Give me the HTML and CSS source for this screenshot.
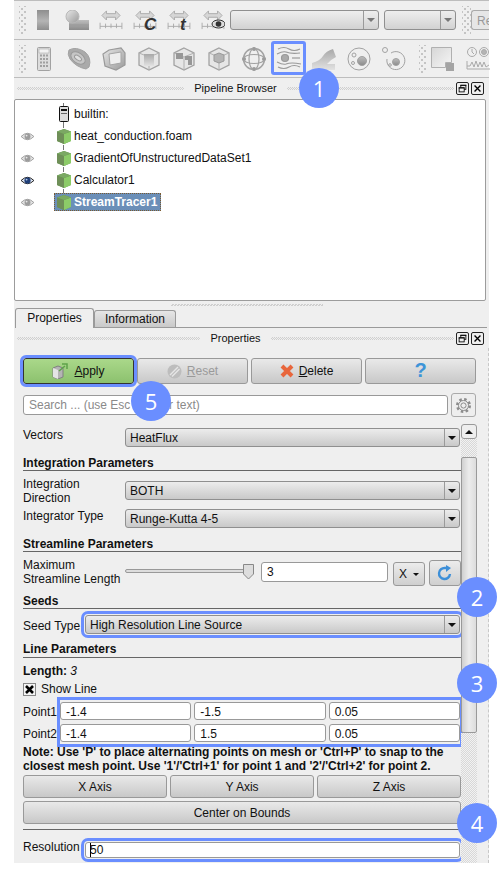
FILE: index.html
```html
<!DOCTYPE html>
<html lang="en">
  <head>
    <meta charset="utf-8">
    <title>Pipeline Browser</title>
    <link rel="stylesheet" href="styles.css">
  </head>
  <body>
    <svg class="defs">
      <defs>
        <linearGradient id="g-v" x1="0" y1="0" x2="0" y2="1"><stop offset="0" stop-color="#bdbdbd"/><stop offset="1" stop-color="#8a8a8a"/></linearGradient>
        <linearGradient id="g-bar" x1="0" y1="0" x2="0" y2="1"><stop offset="0" stop-color="#8e8e8e"/><stop offset=".55" stop-color="#b4b4b4"/><stop offset="1" stop-color="#8e8e8e"/></linearGradient>
        <linearGradient id="g-u" x1="0" y1="0" x2="0" y2="1"><stop offset="0" stop-color="#a8a8a8"/><stop offset="1" stop-color="#e2e2e2"/></linearGradient>
        <linearGradient id="g-d" x1="0" y1="0" x2="1" y2="1"><stop offset="0" stop-color="#e8e8e8"/><stop offset="1" stop-color="#9a9a9a"/></linearGradient>
        <linearGradient id="g-p" x1="0" y1="0" x2="1" y2="1"><stop offset="0" stop-color="#d6d6d6"/><stop offset="1" stop-color="#f6f6f6"/></linearGradient>
        <symbol id="ruler" viewBox="0 0 26 22">
          <path d="M3 6 L8 1 V4 H18 V1 L23 6 L18 11 V8 H8 V11 Z" fill="#d6d6d6" stroke="#a8a8a8"/>
          <path d="M1 18 H25 M1 14 V21 M7 15 V20 M13 15 V20 M19 15 V20 M25 14 V21" stroke="#a8a8a8" fill="none"/>
        </symbol>
        <symbol id="cube-outline" viewBox="0 0 24 24">
          <path d="M12 1 L22 6 V18 L12 23 L2 18 V6 Z" fill="#e6e6e6" stroke="#a2a2a2" stroke-width="1.3"/>
          <path d="M2 6 L12 10 L22 6 M12 10 V23" stroke="#b0b0b0" fill="none"/>
        </symbol>
        <symbol id="green-cube" viewBox="0 0 16 17">
          <path d="M8 1 L15 3.5 V13 L8 16 L1 13 V3.5 Z" fill="#5f9a48"/>
          <path d="M1 3.5 L8 6 V16 L1 13 Z" fill="#6f8f58"/>
          <path d="M8 6 L15 3.5 V13 L8 16 Z" fill="#8ccb68"/>
          <path d="M8 1 L15 3.5 L8 6 L1 3.5 Z" fill="#7ba863"/>
        </symbol>
        <symbol id="eye" viewBox="0 0 16 12">
          <path d="M1 6 Q8 -1 15 6 Q8 13 1 6 Z" fill="#e4e4e4" stroke="#9a9a9a"/>
          <circle cx="8" cy="6" r="3.2" fill="#9c9c9c"/>
          <circle cx="7" cy="5" r="1" fill="#e8e8e8"/>
        </symbol>
        <symbol id="eye-on" viewBox="0 0 16 12">
          <path d="M1 6 Q8 -1 15 6 Q8 13 1 6 Z" fill="#dfe6f2" stroke="#111"/>
          <circle cx="8" cy="6" r="3.4" fill="#1f3f78"/>
          <circle cx="7" cy="5" r="1" fill="#b9c9e6"/>
        </symbol>
        <symbol id="restore" viewBox="0 0 13 13">
          <rect x="4.5" y="2.5" width="6" height="5" fill="none" stroke="#000"/>
          <rect x="2.5" y="5.5" width="6" height="5" fill="#eee" stroke="#000"/>
          <path d="M4 3 H11 M2 6 H9" stroke="#000"/>
        </symbol>
        <symbol id="close" viewBox="0 0 13 13">
          <path d="M3 3 L10 10 M10 3 L3 10" stroke="#000" stroke-width="1.6"/>
        </symbol>
      </defs>
    </svg>

    <div class="app">
      <div class="toolbar toolbar-one">
        <span class="grip"></span>
        <span class="tool"><svg width="14" height="20" viewBox="0 0 14 20"><rect x="1" width="12" height="20" fill="url(#g-bar)"/></svg></span>
        <span class="tool"><svg width="24" height="20" viewBox="0 0 24 20"><rect x="4" y="10" width="20" height="10" fill="url(#g-v)"/><path d="M4 15 H24" stroke="#999"/><circle cx="7.5" cy="6.5" r="6.5" fill="url(#g-d)" stroke="#b8b8b8"/></svg></span>
        <span class="tool"><svg width="24" height="20"><use href="#ruler"/></svg></span>
        <span class="tool"><svg class="letter-svg" width="24" height="26"><use href="#ruler" width="24" height="20"/><text x="11" y="20" class="ruler-c">C</text></svg></span>
        <span class="tool"><svg class="letter-svg" width="24" height="26"><use href="#ruler" width="24" height="20"/><text x="13" y="20" class="ruler-t">t</text></svg></span>
        <span class="tool"><svg width="24" height="20"><use href="#ruler"/><ellipse cx="17.5" cy="14" rx="6.5" ry="4" fill="#ddd" stroke="#333"/><circle cx="17.5" cy="14" r="2.8" fill="#333"/></svg></span>
        <div class="combo combo-blank combo-a"><span class="combo-text"></span><span class="combo-arrow grey"></span></div>
        <div class="combo combo-blank combo-b"><span class="combo-text"></span><span class="combo-arrow grey"></span></div>
        <span class="grip grip-mid"></span>
        <div class="cut-btn">Re</div>
      </div>

      <div class="toolbar toolbar-two">
        <span class="grip"></span>
        <span class="slot"><svg width="14" height="24" viewBox="0 0 14 24"><rect x=".5" y=".5" width="13" height="23" rx="1" fill="#ddd" stroke="#a2a2a2"/><rect x="2" y="2" width="10" height="4" fill="#f2f2f2" stroke="#aaa" stroke-width=".6"/><path d="M3 8.5 H5 M6 8.5 H8 M9 8.5 H11 M3 12 H5 M6 12 H8 M9 12 H11 M3 15.5 H5 M6 15.5 H8 M9 15.5 H11 M3 19 H5 M6 19 H8 M9 19 H11" stroke="#a0a0a0" stroke-width="1.8"/></svg></span>
        <span class="slot"><svg width="25" height="24" viewBox="0 0 25 24"><path d="M3 3 Q10 -1 19 5 Q26 11 23 20 L20 22 Q10 20 4 12 Q1 7 3 3 Z" fill="#aaa" stroke="#a2a2a2"/><ellipse cx="12" cy="11" rx="8" ry="5" transform="rotate(35 12 11)" fill="#c6c6c6" stroke="#999"/><ellipse cx="12" cy="11" rx="4" ry="2" transform="rotate(35 12 11)" fill="#e0e0e0" stroke="#999"/></svg></span>
        <span class="slot"><svg width="24" height="24" viewBox="0 0 24 24"><path d="M7 3 L19 1 L23 6 V18 L14 23 L3 19 L1 7 Z" fill="url(#g-d)" stroke="#999" stroke-width="1.2"/><path d="M7 7 L19 5 V16 L8 18 Z" fill="#eee" stroke="#a5a5a5"/></svg></span>
        <span class="slot"><svg width="24" height="24" viewBox="0 0 24 24"><use href="#cube-outline"/><rect x="7" y="7" width="10" height="12" fill="url(#g-u)"/></svg></span>
        <span class="slot"><svg width="24" height="24" viewBox="0 0 24 24"><use href="#cube-outline"/><path d="M4 6 H11 V12 H4 Z M13 9 H20 V18 H16 V13 H13 Z" fill="#979797"/></svg></span>
        <span class="slot"><svg width="24" height="24" viewBox="0 0 24 24"><use href="#cube-outline"/><path d="M12 6 L17 8 V14 L12 16 L7 14 V8 Z" fill="#b4b4b4" stroke="#999"/></svg></span>
        <span class="slot"><svg width="24" height="24" viewBox="0 0 24 24" fill="none" stroke="#a2a2a2" stroke-width="1.2"><circle cx="12" cy="12" r="10.5" stroke-width="1.5"/><ellipse cx="12" cy="12" rx="5" ry="10.5"/><ellipse cx="12" cy="12" rx="10.5" ry="4.5"/><circle cx="12" cy="2" r="1.5" fill="#999"/><circle cx="12" cy="22" r="1.5" fill="#999"/><circle cx="2" cy="12" r="1.5" fill="#999"/><circle cx="22" cy="12" r="1.5" fill="#999"/></svg></span>
        <span class="slot slot-active"><svg width="26" height="24" viewBox="0 0 26 24" fill="none" stroke="#999" stroke-width="1.2"><path d="M2 3 Q8 0 13 3 T24 3"/><path d="M1 8 Q7 5 10 6 Q15 8 24 7"/><path d="M1 16 Q7 19 10 18 Q15 16 25 18"/><path d="M2 21 Q8 24 13 21 T24 21"/><path d="M16 12 H24"/><circle cx="9" cy="12" r="3.5" fill="#aaa"/></svg></span>
        <span class="slot"><svg width="24" height="22" viewBox="0 0 24 22"><path d="M0 15 Q8 13 11 8 Q14 3 21 1 L24 9 Q18 12 15 16 H23 V22 H0 Z" fill="url(#g-u)"/></svg></span>
        <span class="slot"><svg width="24" height="24" viewBox="0 0 24 24" fill="none" stroke="#a2a2a2"><circle cx="12" cy="12" r="11"/><circle cx="15" cy="14" r="4.5" fill="url(#g-v)"/><circle cx="7" cy="8" r="2"/><circle cx="6" cy="16" r="1.5"/></svg></span>
        <span class="slot"><svg width="24" height="24" viewBox="0 0 24 24" fill="none" stroke="#a2a2a2"><circle cx="3" cy="3" r="2.5"/><path d="M9 6 A9 9 0 1 1 5 12"/><circle cx="14" cy="15" r="3.5" fill="url(#g-v)"/><circle cx="8" cy="18" r="1.3"/></svg></span>
        <span class="grip grip-two"></span>
        <span class="slot-plain"><svg width="23" height="24" viewBox="0 0 23 24"><path d="M.5 .5 H20.5 V15.5 H14.5 V20.5 H.5 Z" fill="url(#g-p)" stroke="#b0b0b0"/><rect x="15" y="16" width="8" height="8" fill="#a4a4a4"/></svg></span>
        <span class="slot-plain slot-last"><svg width="24" height="24" viewBox="0 0 24 24" fill="none" stroke="#aaa"><circle cx="6" cy="5" r="4.5"/><path d="M6 2 V5 L8 7"/><circle cx="18" cy="5" r="4.5"/><circle cx="18" cy="5" r="2.5" fill="#b4b4b4"/><path d="M1 14 V22 H24 M1 19 L4 19 L6 15 L8 20 L10 14 L12 20 L14 15 L16 20 L18 15 L20 20 L23 18"/></svg></span>
      </div>

      <div class="dock-title dock-pipeline">
        <span class="hatch"></span><span class="dock-text">Pipeline Browser</span><span class="hatch"></span>
        <span class="dock-btn"><svg width="11" height="11" viewBox="0 0 13 13"><use href="#restore"/></svg></span>
        <span class="dock-btn"><svg width="11" height="11" viewBox="0 0 13 13"><use href="#close"/></svg></span>
      </div>

      <div class="tree">
        <div class="node"><span class="eye-cell"></span><span class="node-icon"><svg width="10" height="16" viewBox="0 0 10 16"><rect x=".5" y=".5" width="9" height="15" rx="1" fill="#ddd" stroke="#111"/><rect x="2" y="3" width="6" height="2" fill="#111"/><rect x="2" y="7" width="6" height="1" fill="#666"/></svg></span><span class="node-name">builtin:</span></div>
        <div class="node"><span class="eye-cell"><svg width="15" height="11"><use href="#eye"/></svg></span><span class="node-icon"><svg width="16" height="17"><use href="#green-cube"/></svg></span><span class="node-name">heat_conduction.foam</span></div>
        <div class="node"><span class="eye-cell"><svg width="15" height="11"><use href="#eye"/></svg></span><span class="node-icon"><svg width="16" height="17"><use href="#green-cube"/></svg></span><span class="node-name">GradientOfUnstructuredDataSet1</span></div>
        <div class="node"><span class="eye-cell"><svg width="15" height="11"><use href="#eye-on"/></svg></span><span class="node-icon"><svg width="16" height="17"><use href="#green-cube"/></svg></span><span class="node-name">Calculator1</span></div>
        <div class="node node-last"><span class="eye-cell"><svg width="15" height="11"><use href="#eye"/></svg></span><span class="node-sel"><span class="node-icon"><svg width="16" height="17"><use href="#green-cube"/></svg></span><span class="node-name">StreamTracer1</span></span></div>
      </div>

      <div class="splitter"><span></span></div>

      <div class="tabs">
        <div class="tab tab-on">Properties</div>
        <div class="tab">Information</div>
      </div>

      <div class="dock-title dock-props">
        <span class="hatch"></span><span class="dock-text">Properties</span><span class="hatch"></span>
        <span class="dock-btn"><svg width="11" height="11" viewBox="0 0 13 13"><use href="#restore"/></svg></span>
        <span class="dock-btn"><svg width="11" height="11" viewBox="0 0 13 13"><use href="#close"/></svg></span>
      </div>

      <div class="props">
        <div class="actions">
          <div class="btn btn-apply"><svg width="17" height="16" viewBox="0 0 17 16"><path d="M1 5 L6 3 L11 5 V14 L6 16 L1 14 Z" fill="#b4b4b4" stroke="#808080"/><path d="M1 5 L6 7 V16 L1 14 Z" fill="#e4e4e4"/><path d="M7 8 L13 3 M10 1 H15 V6" stroke="#5da24a" stroke-width="1.5" fill="none"/></svg><span><u>A</u>pply</span></div>
          <div class="btn btn-off"><svg width="15" height="15" viewBox="0 0 15 15"><circle cx="7.5" cy="7.5" r="7" fill="#bdbdbd"/><path d="M3 11 L11 3 M5 12.5 L12.5 5" stroke="#e6e6e6" stroke-width="1.4"/></svg><span><u>R</u>eset</span></div>
          <div class="btn"><svg width="14" height="14" viewBox="0 0 14 14"><path d="M2 2 L12 12 M12 2 L2 12" stroke="#e8663c" stroke-width="4"/></svg><span><u>D</u>elete</span></div>
          <div class="btn btn-help">?</div>
        </div>

        <div class="search-row">
          <div class="search">Search ... (use Esc to clear text)</div>
          <div class="gear-btn"><svg width="17" height="17" viewBox="0 0 17 17" fill="none" stroke="#8c8c8c"><circle cx="8.5" cy="8.5" r="6" stroke-width="3" stroke-dasharray="2.4 2.3"/><circle cx="8.5" cy="8.5" r="5" fill="#eee"/><circle cx="8.5" cy="8.5" r="2.6"/></svg></div>
        </div>

        <div class="scroll-area">
          <div class="form">
            <div class="row row-vectors"><span class="lbl">Vectors</span><div class="combo field"><span class="combo-text">HeatFlux</span><span class="combo-arrow"></span></div></div>

            <div class="section sec-integration">Integration Parameters</div>
            <div class="row row-dir"><span class="lbl">Integration<br>Direction</span><div class="combo field"><span class="combo-text">BOTH</span><span class="combo-arrow"></span></div></div>
            <div class="row row-type"><span class="lbl">Integrator Type</span><div class="combo field"><span class="combo-text">Runge-Kutta 4-5</span><span class="combo-arrow"></span></div></div>

            <div class="section sec-stream">Streamline Parameters</div>
            <div class="row row-max">
              <span class="lbl">Maximum<br>Streamline Length</span>
              <svg class="slider" width="129" height="16" viewBox="0 0 129 16"><rect x=".5" y="5.5" width="120" height="3" rx="1.5" fill="#ddd" stroke="#999"/><path d="M118.5 .5 H128.5 V10 L123.5 15 L118.5 10 Z" fill="#ddd" stroke="#888"/></svg>
              <div class="input input-max">3</div>
              <div class="unit-btn">X<span class="mini-arrow"></span></div>
              <div class="reload-btn"><svg width="16" height="16" viewBox="0 0 16 16" fill="none"><path d="M13 9 A5.5 5.5 0 1 1 8 3 H10" stroke="#3d8fd8" stroke-width="2.4"/><path d="M9 0 L14 3 L9 7 Z" fill="#3d8fd8"/></svg></div>
            </div>

            <div class="section sec-seeds">Seeds</div>
            <div class="row row-seed"><span class="lbl lbl-short">Seed Type</span><div class="combo field marked">
              <span class="combo-text">High Resolution Line Source</span><span class="combo-arrow"></span></div></div>

            <div class="section sec-line">Line Parameters</div>
            <div class="length"><b>Length:</b> <i>3</i></div>
            <div class="show-line"><span class="checkbox"><svg width="9" height="9" viewBox="0 0 9 9"><path d="M1 1 L8 8 M8 1 L1 8" stroke="#000" stroke-width="2.6"/></svg></span>Show Line</div>

            <div class="points">
              <div class="point-labels"><span>Point1</span><span>Point2</span></div>
              <div class="point-grid">
                <div class="input">-1.4</div><div class="input">-1.5</div><div class="input">0.05</div>
                <div class="input">-1.4</div><div class="input">1.5</div><div class="input">0.05</div>
              </div>
            </div>

            <p class="note">Note: Use 'P' to place alternating points on mesh or 'Ctrl+P' to snap to the closest mesh point. Use '1'/'Ctrl+1' for point 1 and '2'/'Ctrl+2' for point 2.</p>

            <div class="axis-row">
              <div class="btn">X Axis</div>
              <div class="btn">Y Axis</div>
              <div class="btn">Z Axis</div>
            </div>
            <div class="btn btn-center">Center on Bounds</div>
            <div class="rule"></div>
            <div class="row row-res"><span class="lbl lbl-short lbl-res">Resolution</span><div class="input field marked input-res"><span class="caret"></span>50</div></div>
          </div>

          <div class="scrollbar">
            <div class="scroll-up"><span></span></div>
            <div class="scroll-track scroll-top"></div>
            <div class="scroll-handle"></div>
            <div class="scroll-track scroll-rest"></div>
          </div>
        </div>
      </div>

      <!-- numbered callouts sit on top of the UI -->
      <span class="callout c1">1</span>
      <span class="callout c2">2</span>
      <span class="callout c3">3</span>
      <span class="callout c4">4</span>
      <span class="callout c5">5</span>
    </div>
  </body>
</html>
```

FILE: styles.css
```css
* {
  box-sizing: border-box;
}
body {
  margin: 0;
  background: #fff;
  font-family: "Liberation Sans", Arial, sans-serif;
  font-size: 12px;
  color: #111;
}
.defs {
  display: block;
  width: 0;
  height: 0;
}
.app {
  position: relative;
  width: 475px;
  height: 863px;
  margin-left: 14px;
  background: #efefef;
}

/* toolbars */
.toolbar {
  display: flex;
  align-items: center;
  border-bottom: 1px solid #bdbdbd;
}
.toolbar-one {
  height: 40px;
  border-top: 1px solid #bdbdbd;
}
.toolbar-two {
  height: 38px;
}
.grip {
  width: 12px;
  height: 28px;
  flex: none;
  padding-left: 5px;
  background-image: radial-gradient(circle, #c4c4c4 .9px, transparent 1.2px), radial-gradient(circle, #c4c4c4 .9px, transparent 1.2px);
  background-size: 6px 6px;
  background-position: 0 0, 3px 3px;
  background-origin: content-box;
  background-clip: content-box;
}
.tool {
  width: 34px;
  display: flex;
  justify-content: center;
  flex: none;
}
.letter-svg {
  margin-top: 6px;
}
.slot {
  width: 35px;
  height: 34px;
  display: flex;
  align-items: center;
  justify-content: center;
  flex: none;
}
.slot-active {
  outline: 3px solid #6a8eff;
  outline-offset: -3px;
  border-radius: 3px;
  margin-top: -2px;
}
.slot-plain {
  display: flex;
  flex: none;
}
.grip-two {
  width: 16px;
  margin-left: 4px;
  padding-left: 4px;
  padding-right: 4px;
  margin-right: 0;
}
.slot-last {
  margin-left: 12px;
}
.ruler-c,
.ruler-t {
  font-family: "Liberation Sans", sans-serif;
  font-weight: bold;
  font-style: italic;
  fill: #333;
  font-size: 17px;
}

/* combos */
.combo {
  display: flex;
  align-items: center;
  height: 19px;
  border: 1px solid #8f8f8f;
  border-radius: 3px;
  background: linear-gradient(#ececec, #c9c9c9);
}
.combo-text {
  flex: 1;
  padding-left: 4px;
  white-space: nowrap;
}
.combo-arrow {
  width: 15px;
  height: 100%;
  flex: none;
  border-left: 1px solid #9a9a9a;
  position: relative;
}
.combo-arrow::after {
  content: "";
  position: absolute;
  left: 3px;
  top: 7px;
  border: 4px solid transparent;
  border-top: 4px solid #111;
  border-bottom: 0;
}
.combo-arrow.grey::after {
  border-top-color: #777;
}
.combo-blank {
  height: 20px;
  background: linear-gradient(#eee, #d2d2d2);
}
.combo-a {
  width: 149px;
}
.combo-b {
  width: 72px;
  margin-left: 5px;
}
.grip-mid {
  width: 15px;
  padding-left: 6px;
}
.cut-btn {
  width: 18px;
  height: 20px;
  padding: 3px 0 0 5px;
  border: 1px solid #aaa;
  border-right: 0;
  border-radius: 3px 0 0 3px;
  color: #999;
  background: #e6e6e6;
  overflow: hidden;
}

/* dock title bars */
.dock-title {
  display: flex;
  align-items: center;
  height: 21px;
  padding: 0 5px 0 3px;
}
.dock-pipeline {
  padding-bottom: 1px;
}
.dock-props {
  height: 20px;
}
.hatch {
  flex: 1;
  height: 3px;
  background-image: repeating-conic-gradient(#cfcfcf 0 25%, transparent 0 50%);
  background-size: 2px 2px;
}
.dock-text {
  padding: 0 10px;
  font-size: 11px;
}
.dock-btn {
  width: 13px;
  height: 13px;
  margin-left: 2px;
  border: 1px solid #222;
  border-radius: 2px;
  background: #eee;
  display: flex;
  align-items: center;
  justify-content: center;
}

/* pipeline tree */
.tree {
  width: 472px;
  height: 202px;
  padding-top: 3px;
  background: #fff;
  border: 1px solid #9c9c9c;
  border-radius: 2px;
}
.node {
  display: flex;
  align-items: center;
  height: 22px;
  background: linear-gradient(#777, #777) 48px 0 / 1px 100% no-repeat;
}
.node-last {
  background-size: 1px 4px;
}
.eye-cell {
  width: 39px;
  padding-left: 5px;
  display: flex;
  flex: none;
}
.node-icon {
  width: 20px;
  display: flex;
  justify-content: center;
}
.node-icon svg {
  background: #fff;
}
.node-name {
  white-space: nowrap;
}
.node-sel {
  display: flex;
  align-items: center;
  height: 18px;
  width: 107px;
  background: #6b8fb8;
  outline: 1px dotted #7a5a30;
  outline-offset: -1px;
  color: #fff;
  font-weight: bold;
}
.node-sel .node-icon svg {
  background: transparent;
}

.splitter {
  height: 7px;
  padding: 3px 0 0 157px;
}
.splitter span {
  display: block;
  width: 152px;
  height: 2px;
  background-image: repeating-conic-gradient(#cfcfcf 0 25%, transparent 0 50%);
  background-size: 3px 2px;
}

/* tabs */
.tabs {
  display: flex;
  align-items: flex-end;
  height: 20px;
  margin-left: 1px;
  border-bottom: 1px solid #9a9a9a;
  width: 472px;
}
.tab {
  width: 82px;
  height: 17px;
  line-height: 16px;
  text-align: center;
  border: 1px solid #9a9a9a;
  border-bottom: 0;
  border-radius: 3px 3px 0 0;
  background: linear-gradient(#e6e6e6, #c9c9c9);
}
.tab-on {
  width: 79px;
  height: 20px;
  margin-bottom: -1px;
  line-height: 18px;
  background: #efefef;
}

/* properties panel */
.props {
  height: 515px;
  padding: 10px 0 0 9px;
  border-right: 1px dashed #c8c8c8;
}
.actions {
  display: flex;
  gap: 3px;
  width: 453px;
}
.btn {
  flex: 1;
  height: 26px;
  display: flex;
  align-items: center;
  justify-content: center;
  gap: 5px;
  border: 1px solid #999;
  border-radius: 3px;
  background: linear-gradient(#e9e9e9, #c8c8c8);
}
.btn-apply {
  border-color: #333;
  background: linear-gradient(#aad88a, #8cc16e);
  outline: 3px solid #6a8eff;
}
.btn-off {
  color: #9a9a9a;
}
.btn-help {
  color: #3d94d8;
  font-size: 20px;
  font-weight: bold;
  padding-bottom: 2px;
}
.search-row {
  display: flex;
  align-items: center;
  gap: 3px;
  width: 453px;
  height: 24px;
  margin-top: 9px;
}
.search {
  flex: 1;
  height: 20px;
  padding: 2px 5px;
  border: 1px solid #999;
  border-radius: 3px;
  background: #fff;
  color: #8a8a8a;
}
.gear-btn {
  width: 25px;
  height: 24px;
  display: flex;
  align-items: center;
  justify-content: center;
  border: 1px solid #aaa;
  border-radius: 3px;
  background: #eee;
}
.scroll-area {
  display: flex;
  height: 439px;
  margin-top: 7px;
}
.form {
  width: 438px;
}

/* rows */
.row {
  display: flex;
  align-items: flex-start;
}
.lbl {
  width: 102px;
  flex: none;
  line-height: 14px;
}
.lbl-short {
  width: 62px;
  margin-top: 4px;
  white-space: nowrap;
}
.lbl-res {
  margin-top: 0;
}
.field {
  flex: 1;
  margin-right: 1px;
}
.row-vectors {
  padding-top: 4px;
}
.row-dir {
  margin-top: 6px;
}
.row-dir .combo {
  margin-top: 4px;
}
.row-type {
  margin-top: 4px;
}
.section {
  height: 15px;
  line-height: 14px;
  font-weight: bold;
  border-bottom: 1px solid #666;
}
.sec-integration {
  margin-top: 9px;
}
.sec-stream {
  margin-top: 9px;
}
.sec-seeds {
  margin-top: 8px;
}
.sec-line {
  height: 16px;
  margin-top: 8px;
}
.row-max {
  margin-top: 6px;
}
.row-max .lbl {
  white-space: nowrap;
}
.slider {
  flex: none;
  margin: 6px 7px 0 0;
}
.input {
  height: 18px;
  line-height: 16px;
  padding: 1px 0 0 5px;
  border: 1px solid #999;
  border-radius: 3px;
  background: #fff;
}
.input-max {
  width: 127px;
  height: 20px;
  margin-top: 4px;
  line-height: 17px;
  flex: none;
}
.unit-btn {
  width: 32px;
  height: 24px;
  margin: 4px 0 0 5px;
  flex: none;
  display: flex;
  align-items: center;
  justify-content: center;
  gap: 6px;
  border: 1px solid #999;
  border-radius: 3px;
  background: linear-gradient(#ececec, #cfcfcf);
}
.mini-arrow {
  border: 3px solid transparent;
  border-top: 3px solid #111;
  border-bottom: 0;
}
.reload-btn {
  width: 32px;
  height: 26px;
  margin: 2px 0 0 4px;
  flex: none;
  display: flex;
  align-items: center;
  justify-content: center;
  border: 1px solid #999;
  border-radius: 3px;
  background: linear-gradient(#ececec, #cfcfcf);
}
.row-seed {
  margin-top: 6px;
}
.marked {
  outline: 3px solid #6a8eff;
  outline-offset: 1px;
}
.length {
  height: 14px;
  line-height: 14px;
  margin-top: 6px;
}
.show-line {
  display: flex;
  align-items: center;
  gap: 5px;
  height: 14px;
  margin-top: 4px;
}
.checkbox {
  width: 13px;
  height: 13px;
  display: flex;
  align-items: center;
  justify-content: center;
  border: 1px solid #888;
  background: #f4f4f4;
}
.points {
  display: flex;
  margin: 6px 1px 0 0;
}
.point-labels {
  width: 37px;
  flex: none;
  display: flex;
  flex-direction: column;
  gap: 8px;
}
.point-labels span {
  height: 14px;
  line-height: 20px;
}
.point-grid {
  flex: 1;
  display: grid;
  grid-template-columns: repeat(3, 1fr);
  gap: 4px 3px;
  margin: -2px 0;
  padding: 2px 0;
  outline: 3px solid #6a8eff;
}
.note {
  margin: 3px 0 0;
  line-height: 14px;
  font-weight: bold;
}
.axis-row {
  display: flex;
  gap: 3px;
  margin-top: 2px;
}
.axis-row .btn {
  height: 23px;
}
.btn-center {
  height: 23px;
  flex: none;
  margin-top: 3px;
}
.rule {
  height: 1px;
  margin-top: 5px;
  background: #666;
}
.row-res {
  margin-top: 10px;
}
.input-res {
  height: 16px;
  margin-top: 2px;
  padding: 0 0 0 4px;
  line-height: 15px;
}
.caret {
  display: inline-block;
  height: 14px;
  vertical-align: -3px;
  margin-right: -1px;
  border-left: 1px solid #000;
}

/* scrollbar */
.scrollbar {
  width: 16px;
  display: flex;
  flex-direction: column;
}
.scroll-up {
  height: 15px;
  flex: none;
  border: 1px solid #999;
  border-radius: 3px;
  background: #eee;
  display: flex;
  align-items: center;
  justify-content: center;
}
.scroll-up span {
  border: 4px solid transparent;
  border-bottom: 4px solid #111;
  border-top: 0;
}
.scroll-track {
  background-image: repeating-conic-gradient(#d8d8d8 0 25%, #f2f2f2 0 50%);
  background-size: 2px 2px;
}
.scroll-top {
  height: 18px;
}
.scroll-handle {
  height: 276px;
  flex: none;
  border: 1px solid #999;
  border-radius: 2px;
  background: linear-gradient(90deg, #d0d0d0, #ececec 50%, #dcdcdc);
}
.scroll-rest {
  flex: 1;
}

/* callouts */
.callout {
  position: absolute;
  width: 40px;
  height: 40px;
  line-height: 40px;
  text-align: center;
  border-radius: 50%;
  background: #6a8eff;
  color: #fff;
  font-family: "Open Sans", sans-serif;
  font-size: 22px;
}
.c1 {
  left: 285px;
  top: 68px;
}
.c2 {
  left: 443px;
  top: 577px;
}
.c3 {
  left: 443px;
  top: 663px;
}
.c4 {
  left: 443px;
  top: 803px;
}
.c5 {
  left: 117px;
  top: 381px;
}
```
